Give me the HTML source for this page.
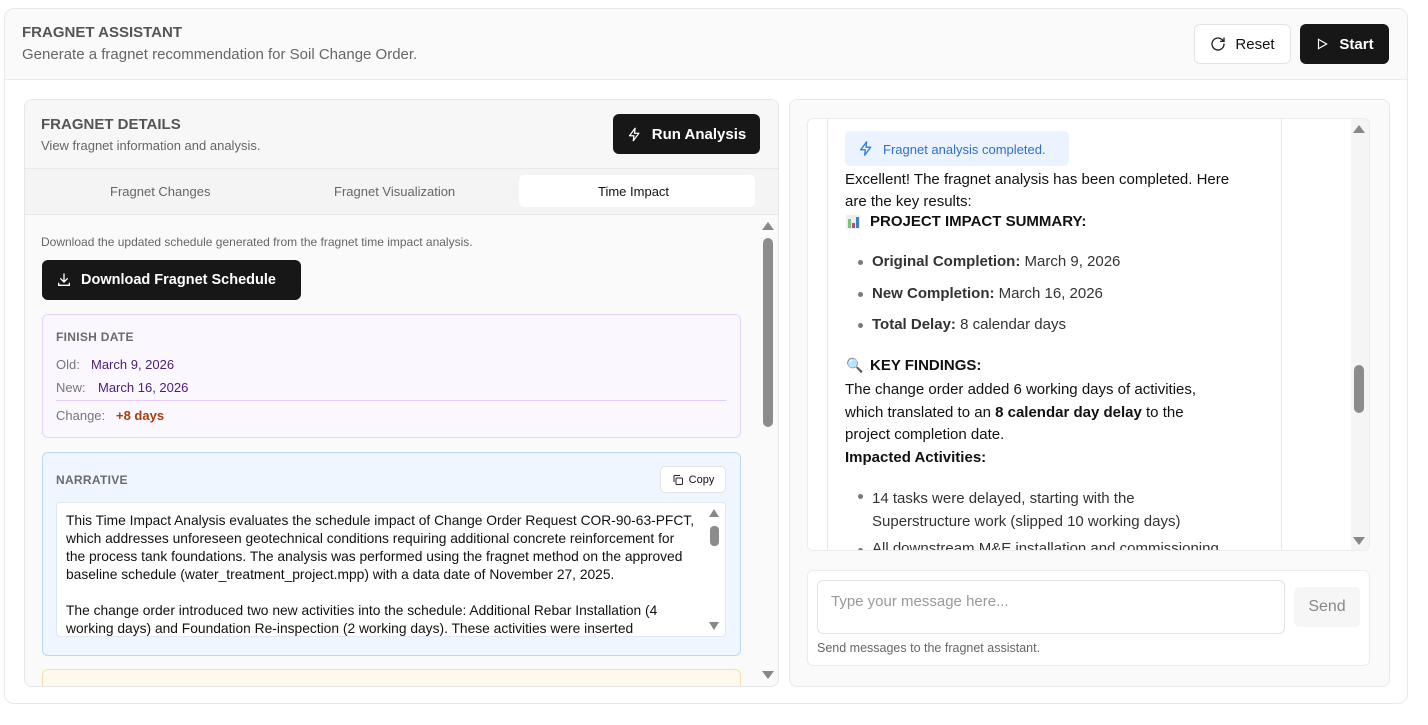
<!DOCTYPE html>
<html><head><meta charset="utf-8"><style>
*{box-sizing:border-box;margin:0;padding:0}
body{width:1428px;height:725px;background:#fff;font-family:"Liberation Sans",sans-serif;position:relative;overflow:hidden;color:#111}
.a{position:absolute;white-space:nowrap}
.btn{position:absolute;border-radius:6px;display:flex;align-items:center;justify-content:center;font-weight:bold;font-size:15px}
.dk{background:#171717;color:#fff}
.lbl{color:#6b6b6b;font-size:12px;font-weight:bold;letter-spacing:.3px}
.li{position:absolute;width:5px;height:5px;border-radius:50%;background:#777}
.tri-up{position:absolute;width:0;height:0;border-left:6px solid transparent;border-right:6px solid transparent;border-bottom:8px solid #888}
.tri-dn{position:absolute;width:0;height:0;border-left:6px solid transparent;border-right:6px solid transparent;border-top:8px solid #888}
</style></head><body>
<div class="a" style="left:4px;top:8px;width:1404px;height:696px;border:1px solid #e8e8e8;border-radius:10px;background:#fff"></div>
<div class="a" style="left:5px;top:9px;width:1402px;height:71px;background:#fafafa;border-bottom:1px solid #ebebeb;border-radius:10px 10px 0 0"></div>
<div class="a" style="left:22px;top:24px;font-size:15px;font-weight:bold;color:#555">FRAGNET ASSISTANT</div>
<div class="a" style="left:22px;top:46px;font-size:15px;color:#666">Generate a fragnet recommendation for Soil Change Order.</div>
<div class="btn" style="left:1194px;top:24px;width:97px;height:40px;background:#fff;border:1px solid #e3e3e3;color:#111;font-weight:normal">
<svg width="16" height="16" viewBox="0 0 24 24" fill="none" stroke="#222" stroke-width="2" stroke-linecap="round" style="margin-right:9px"><path d="M21 12a9 9 0 1 1-3-6.7L21 8"/><path d="M21 3v5h-5"/></svg>Reset</div>
<div class="btn dk" style="left:1300px;top:24px;width:89px;height:40px">
<svg width="14" height="14" viewBox="0 0 24 24" fill="none" stroke="#fff" stroke-width="2" style="margin-right:10px"><path d="M6 4l14 8-14 8z"/></svg>Start</div>

<div class="a" style="left:24px;top:99px;width:755px;height:588px;border:1px solid #e6e6e6;border-radius:8px;background:#fafafa;overflow:hidden">
 <div class="a" style="left:0;top:0;width:755px;height:69px;background:#f7f7f7;border-bottom:1px solid #e8e8e8"></div>
 <div class="a" style="left:0;top:69px;width:755px;height:46px;background:#f4f4f4;border-bottom:1px solid #e8e8e8"></div>
</div>
<div class="a" style="left:41px;top:116px;font-size:15px;font-weight:bold;color:#555">FRAGNET DETAILS</div>
<div class="a" style="left:41px;top:138px;font-size:13px;color:#666">View fragnet information and analysis.</div>
<div class="btn dk" style="left:613px;top:114px;width:147px;height:40px;font-size:15px">
<svg width="15" height="17" viewBox="0 0 24 24" fill="none" stroke="#fff" stroke-width="2" stroke-linejoin="round" style="margin-right:10px"><path d="M13 2L4 14h7l-1 8 9-12h-7z"/></svg>Run Analysis</div>
<div class="a" style="left:519px;top:175px;width:236px;height:32px;background:#fff;border-radius:5px"></div>
<div class="a" style="left:110px;top:184px;font-size:13px;color:#666">Fragnet Changes</div>
<div class="a" style="left:334px;top:184px;font-size:13px;color:#666">Fragnet Visualization</div>
<div class="a" style="left:598px;top:184px;font-size:13px;color:#111">Time Impact</div>
<div class="tri-up" style="left:762px;top:222px"></div>
<div class="a" style="left:763px;top:238px;width:10px;height:189px;background:#8c8c8c;border-radius:5px"></div>
<div class="tri-dn" style="left:762px;top:671px"></div>

<div class="a" style="left:41px;top:235px;font-size:12px;color:#666">Download the updated schedule generated from the fragnet time impact analysis.</div>
<div class="btn dk" style="left:42px;top:260px;width:259px;height:40px;font-size:14.5px;justify-content:flex-start;padding-left:14px">
<svg width="16" height="16" viewBox="0 0 24 24" fill="none" stroke="#fff" stroke-width="2" stroke-linecap="round" style="margin-right:9px"><path d="M12 3v12M7 10l5 5 5-5M4 17v3h16v-3"/></svg>Download Fragnet Schedule</div>

<div class="a" style="left:42px;top:314px;width:699px;height:124px;background:#fbf7ff;border:1px solid #e6d3fb;border-radius:6px"></div>
<div class="a lbl" style="left:56px;top:330px">FINISH DATE</div>
<div class="a" style="left:56px;top:357px;font-size:13px;color:#777">Old:</div>
<div class="a" style="left:91px;top:357px;font-size:13px;color:#4a1d78">March 9, 2026</div>
<div class="a" style="left:56px;top:380px;font-size:13px;color:#777">New:</div>
<div class="a" style="left:98px;top:380px;font-size:13px;color:#4a1d78">March 16, 2026</div>
<div class="a" style="left:56px;top:400px;width:670px;height:1px;background:#e4cdf8"></div>
<div class="a" style="left:56px;top:408px;font-size:13px;color:#777">Change:</div>
<div class="a" style="left:116px;top:408px;font-size:13px;color:#a3400c;font-weight:bold">+8 days</div>

<div class="a" style="left:42px;top:452px;width:699px;height:204px;background:#eff6ff;border:1px solid #bcd8f7;border-radius:6px"></div>
<div class="a lbl" style="left:56px;top:473px">NARRATIVE</div>
<div class="a" style="left:660px;top:466px;width:66px;height:27px;background:#fff;border:1px solid #e3e3e3;border-radius:5px;font-size:11px;display:flex;align-items:center;justify-content:center">
<svg width="12" height="12" viewBox="0 0 24 24" fill="none" stroke="#222" stroke-width="2" style="margin-right:5px"><rect x="8" y="8" width="13" height="13" rx="2"/><path d="M4 16V5a2 2 0 0 1 2-2h10"/></svg>Copy</div>
<div class="a" style="left:56px;top:502px;width:670px;height:135px;background:#fff;border:1px solid #dfe8f3;border-radius:4px;overflow:hidden">
 <div style="position:absolute;left:9px;top:9px;font-size:13.8px;line-height:18px;color:#111;white-space:nowrap">This Time Impact Analysis evaluates the schedule impact of Change Order Request COR-90-63-PFCT,<br>which addresses unforeseen geotechnical conditions requiring additional concrete reinforcement for<br>the process tank foundations. The analysis was performed using the fragnet method on the approved<br>baseline schedule (water_treatment_project.mpp) with a data date of November 27, 2025.<br><br>The change order introduced two new activities into the schedule: Additional Rebar Installation (4<br>working days) and Foundation Re-inspection (2 working days). These activities were inserted</div>
</div>
<div class="tri-up" style="left:709px;top:509px;border-left-width:5px;border-right-width:5px"></div>
<div class="a" style="left:710px;top:526px;width:9px;height:20px;background:#8c8c8c;border-radius:4px"></div>
<div class="tri-dn" style="left:709px;top:622px;border-left-width:5px;border-right-width:5px"></div>
<div class="a" style="left:42px;top:669px;width:699px;height:17px;background:#fff8ec;border:1px solid #fbdcae;border-bottom:none;border-radius:6px 6px 0 0"></div>

<div class="a" style="left:789px;top:99px;width:601px;height:588px;border:1px solid #e8e8e8;border-radius:8px;background:#fafafa"></div>
<div class="a" style="left:807px;top:118px;width:563px;height:433px;border:1px solid #ececec;border-radius:6px;background:#fff;overflow:hidden">
 <div class="a" style="left:19px;top:-1px;width:455px;height:440px;background:#fff;border:1px solid #e6e6e6;border-top:none"></div>
 <div class="a" style="left:543px;top:0;width:20px;height:433px;background:#f5f5f5"></div>
</div>
<div class="tri-up" style="left:1353px;top:125px"></div>
<div class="a" style="left:1354px;top:365px;width:10px;height:48px;background:#8c8c8c;border-radius:5px"></div>
<div class="tri-dn" style="left:1353px;top:537px"></div>

<div class="a" style="left:845px;top:131px;width:224px;height:35px;background:#eaf3ff;border-radius:5px"></div>
<svg class="a" style="left:858px;top:140px" width="16" height="17" viewBox="0 0 24 24" fill="none" stroke="#3b7bd6" stroke-width="2" stroke-linejoin="round"><path d="M13 2L4 14h7l-1 8 9-12h-7z"/></svg>
<div class="a" style="left:883px;top:142px;font-size:13px;color:#2f6fc9">Fragnet analysis completed.</div>
<div class="a" style="left:845px;top:169px;font-size:15px;line-height:22px;color:#111">Excellent! The fragnet analysis has been completed. Here<br>are the key results:</div>
<div class="a" style="left:846px;top:215px;width:14px;height:14px;background:#eee;border-radius:2px"><div style="position:absolute;left:2px;bottom:1px;width:3px;height:9px;background:#7cc47a"></div><div style="position:absolute;left:6px;bottom:1px;width:3px;height:5px;background:#c0457f"></div><div style="position:absolute;left:10px;bottom:1px;width:3px;height:11px;background:#3d7fd6"></div></div>
<div class="a" style="left:870px;top:213px;font-size:15px;font-weight:bold;color:#111">PROJECT IMPACT SUMMARY:</div>
<div class="li" style="left:858px;top:260px"></div>
<div class="a" style="left:872px;top:253px;font-size:15px;color:#333"><b>Original Completion:</b> March 9, 2026</div>
<div class="li" style="left:858px;top:292px"></div>
<div class="a" style="left:872px;top:285px;font-size:15px;color:#333"><b>New Completion:</b> March 16, 2026</div>
<div class="li" style="left:858px;top:323px"></div>
<div class="a" style="left:872px;top:316px;font-size:15px;color:#333"><b>Total Delay:</b> 8 calendar days</div>
<div class="a" style="left:846px;top:357px;font-size:14px;color:#3d6fc9">&#x1F50D;</div>
<div class="a" style="left:870px;top:357px;font-size:15px;font-weight:bold;color:#111">KEY FINDINGS:</div>
<div class="a" style="left:845px;top:379px;font-size:15px;line-height:22.5px;color:#111">The change order added 6 working days of activities,<br>which translated to an <b>8 calendar day delay</b> to the<br>project completion date.<br><b>Impacted Activities:</b></div>
<div class="li" style="left:858px;top:494px"></div>
<div class="a" style="left:872px;top:487px;font-size:15px;line-height:23px;color:#333">14 tasks were delayed, starting with the<br>Superstructure work (slipped 10 working days)</div>
<div class="a" style="left:845px;top:540px;width:435px;height:10px;overflow:hidden"><div class="li" style="left:13px;top:8px"></div><div style="position:absolute;left:27px;top:0;font-size:15px;color:#333">All downstream M&amp;E installation and commissioning</div></div>

<div class="a" style="left:807px;top:570px;width:563px;height:96px;background:#fff;border:1px solid #ececec;border-radius:6px"></div>
<div class="a" style="left:817px;top:580px;width:468px;height:54px;border:1px solid #e3e3e3;border-radius:6px;background:#fff"></div>
<div class="a" style="left:831px;top:593px;font-size:15px;color:#999">Type your message here...</div>
<div class="a" style="left:1294px;top:587px;width:66px;height:40px;background:#f6f6f6;border-radius:5px;color:#888;font-size:16px;display:flex;align-items:center;justify-content:center">Send</div>
<div class="a" style="left:817px;top:641px;font-size:12.5px;color:#666">Send messages to the fragnet assistant.</div>
</body></html>
